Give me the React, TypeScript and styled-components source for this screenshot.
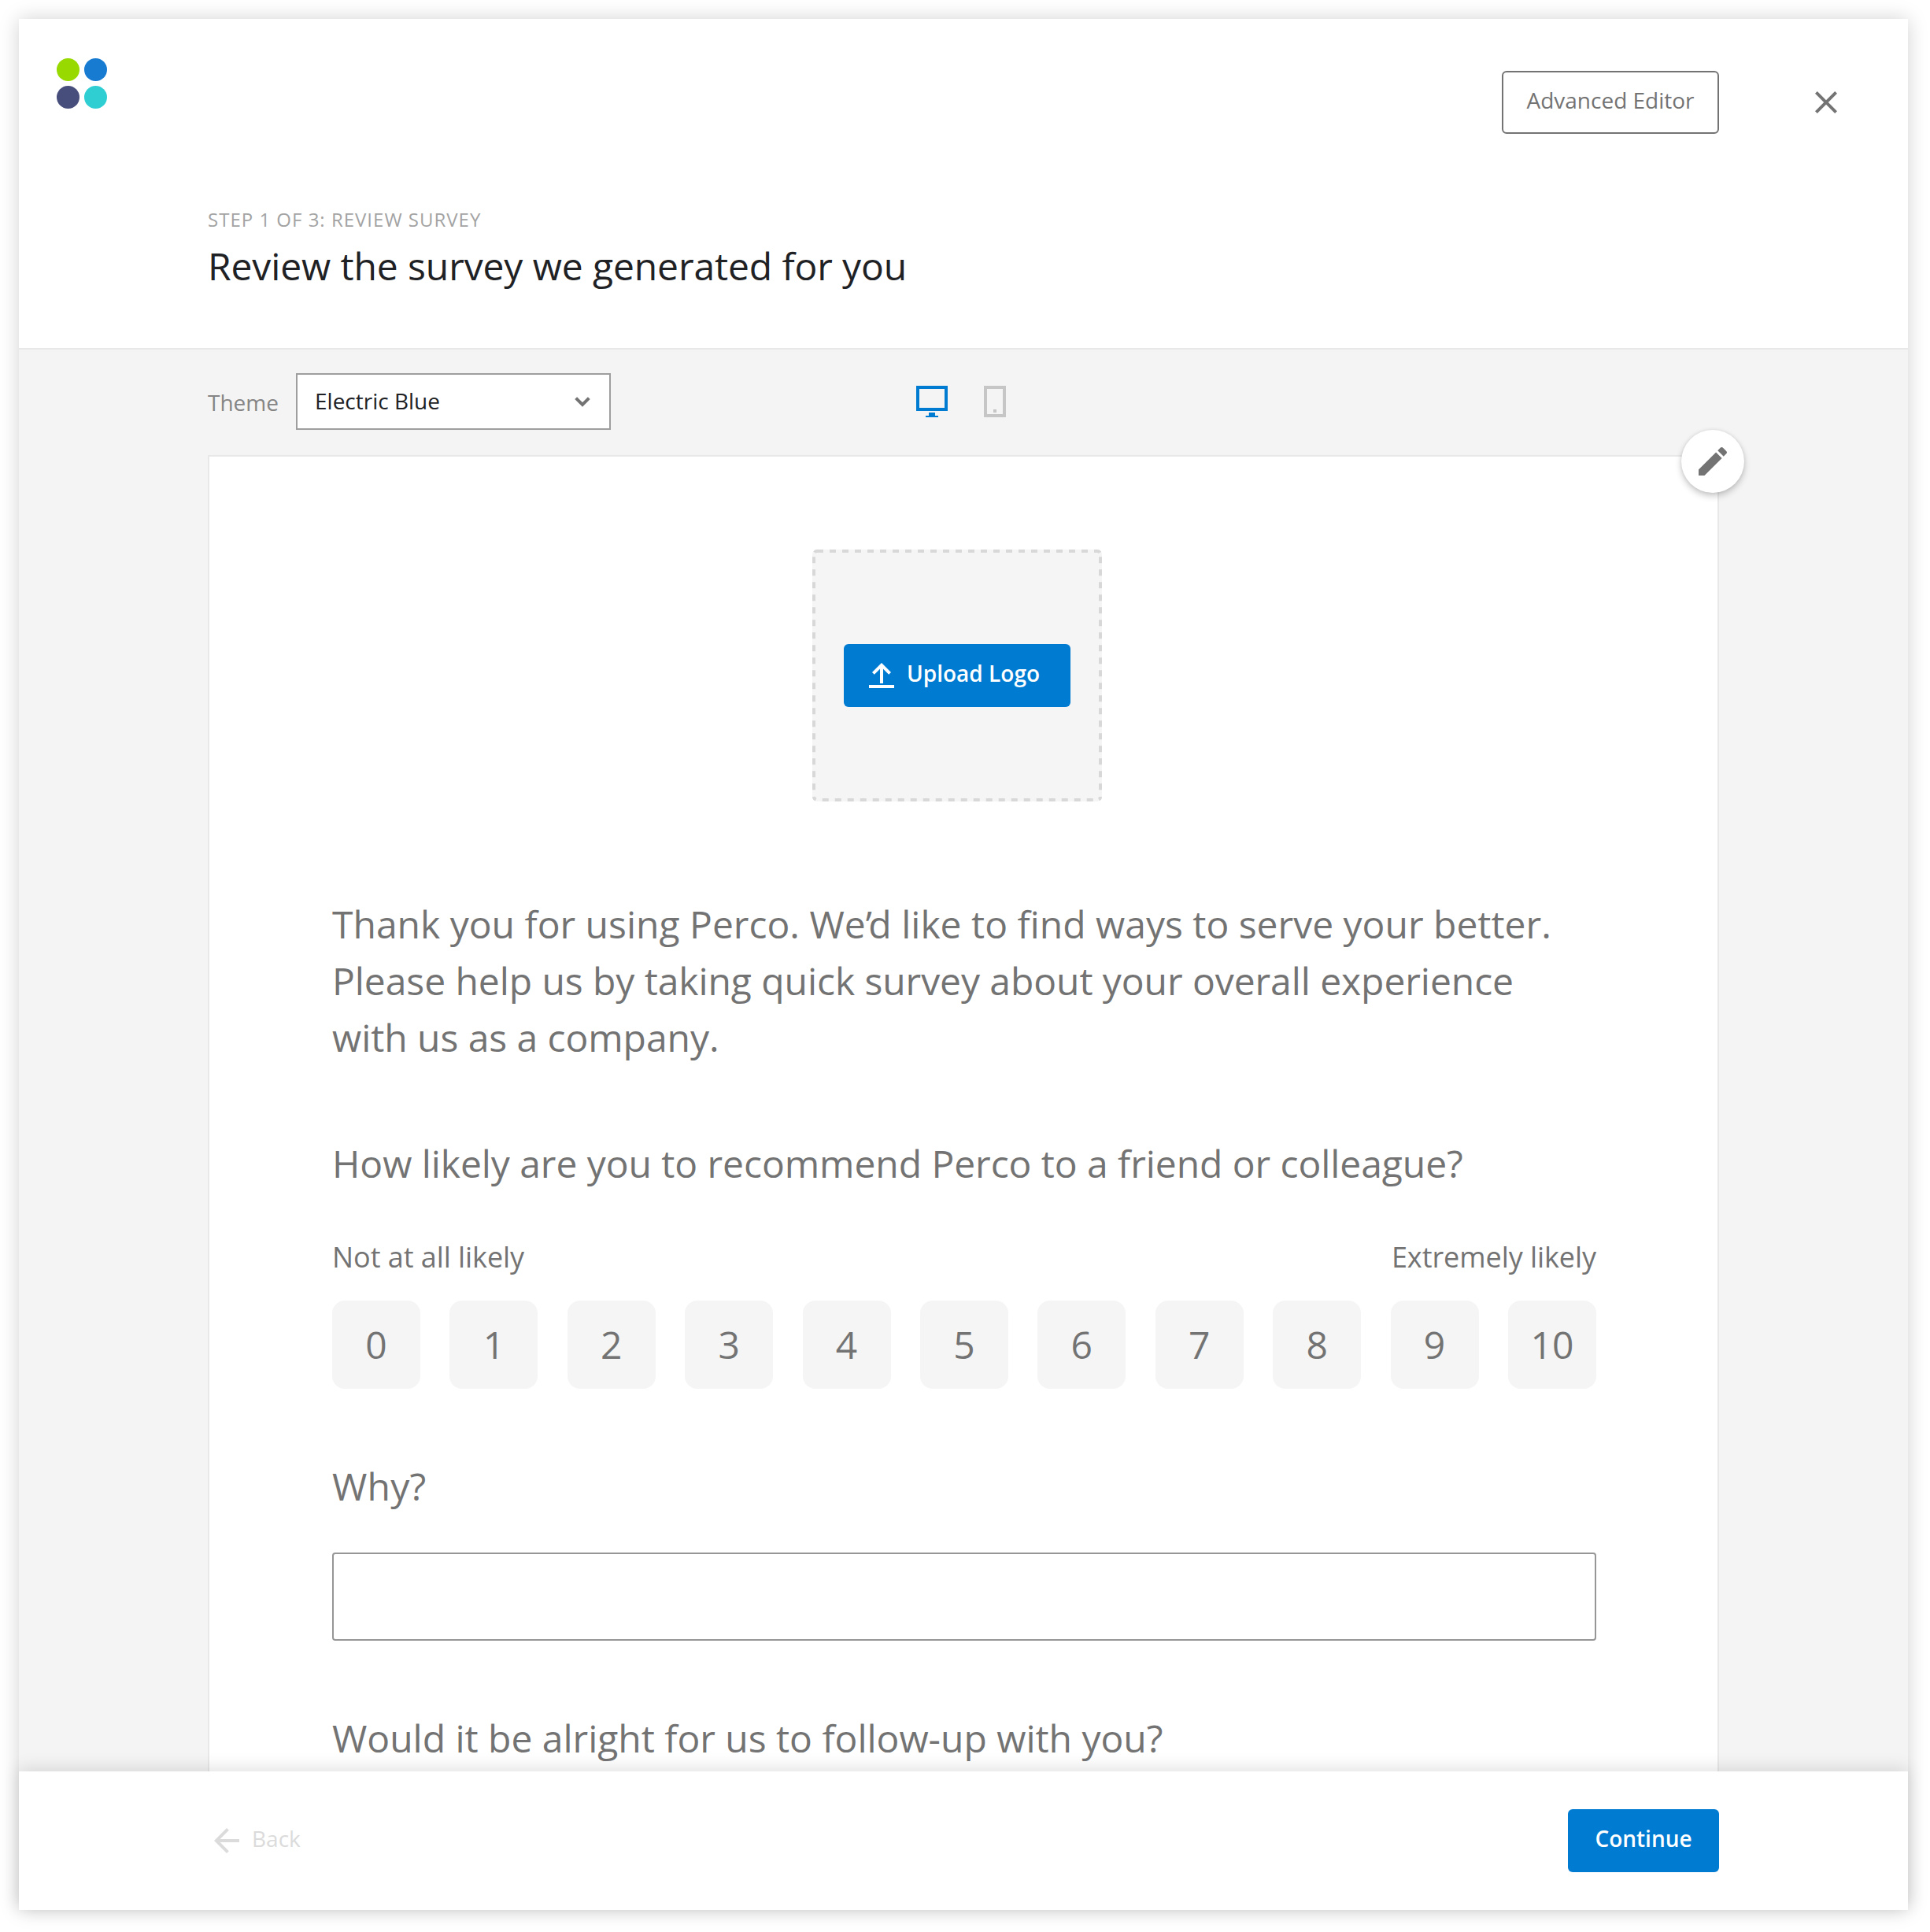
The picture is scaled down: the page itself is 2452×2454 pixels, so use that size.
import React from "react";
import styled, { createGlobalStyle } from "styled-components";

const colors = {
  blue: "#007bd2",
  text: "#202124",
  gray: "#737373",
  lightGray: "#a3a3a3",
  canvas: "#f4f4f4",
  tile: "#f5f5f5",
  line: "#e8e8e8",
};

const GlobalStyle = createGlobalStyle`
  *, *::before, *::after { box-sizing: border-box; }
  body {
    margin: 0;
    background: #fff;
    font-family: "Open Sans", "Noto Sans", sans-serif;
    color: ${colors.gray};
  }
  button { font-family: inherit; margin: 0; cursor: pointer; }
  svg { display: block; flex: none; }
`;

const Page = styled.div`
  height: 2454px;
  padding: 24px 28px 28px 24px;
  overflow: hidden;
`;

const Window = styled.div`
  width: 2400px;
  height: 2402px;
  display: flex;
  flex-direction: column;
  background: #fff;
  box-shadow: 0 0 24px rgba(0, 0, 0, 0.18);
`;

const Header = styled.header`
  flex: none;
  height: 420px;
  border-bottom: 2px solid ${colors.line};
`;

const TopBar = styled.div`
  height: 239px;
  display: flex;
  align-items: flex-start;
  justify-content: space-between;
  padding: 50px 80px 0 48px;
`;

const LogoMark = styled.div`
  display: grid;
  grid-template-columns: repeat(2, 29px);
  grid-auto-rows: 29px;
  gap: 6px;
`;

const LogoDot = styled.span<{ $color: string }>`
  border-radius: 50%;
  background: ${(p) => p.$color};
`;

const TopActions = styled.div`
  display: flex;
  align-items: center;
  gap: 112px;
  margin-top: 16px;
`;

const Button = styled.button<{ $primary?: boolean; $width: number }>`
  width: ${(p) => p.$width}px;
  height: 80px;
  padding: 0;
  display: flex;
  align-items: center;
  justify-content: center;
  border: ${(p) => (p.$primary ? "none" : `2px solid ${colors.gray}`)};
  border-radius: 6px;
  background: ${(p) => (p.$primary ? colors.blue : "#fff")};
  color: ${(p) => (p.$primary ? "#fff" : colors.gray)};
  font-size: 28px;
  font-weight: ${(p) => (p.$primary ? 600 : 400)};
`;

const UploadButton = styled(Button)`
  justify-content: flex-start;
  gap: 16px;
  padding-left: 32px;
`;

const ButtonLabel = styled.span`
  line-height: 40px;
  padding-bottom: 6px;
  white-space: nowrap;
`;

const IconButton = styled.button`
  padding: 0;
  border: none;
  background: none;
  color: ${colors.gray};
`;

const Heading = styled.div`
  padding-left: 240px;
`;

const StepLabel = styled.div`
  font-size: 24px;
  line-height: 32px;
  letter-spacing: 1px;
  color: ${colors.lightGray};
`;

const Title = styled.h1`
  margin: 7px 0 0;
  font-size: 48px;
  font-weight: 400;
  line-height: 72px;
  letter-spacing: -0.11px;
  color: ${colors.text};
`;

const Canvas = styled.main`
  flex: 1;
  min-height: 0;
  overflow: hidden;
  padding: 0 240px;
  background: ${colors.canvas};
`;

const Toolbar = styled.div`
  height: 134px;
  display: grid;
  grid-template-columns: 900px auto;
  align-items: center;
  padding-bottom: 2px;
`;

const ThemePicker = styled.div`
  display: flex;
  align-items: center;
  font-size: 28px;
  line-height: 40px;
`;

const ThemeLabel = styled.span`
  width: 112px;
  padding-top: 2px;
  color: #858585;
`;

const Select = styled.div`
  width: 400px;
  height: 72px;
  display: flex;
  align-items: center;
  justify-content: space-between;
  padding: 0 14px 0 22px;
  border: 2px solid #9e9e9e;
  background: #fff;
  color: ${colors.text};
`;

const SelectValue = styled.span`
  padding-bottom: 2px;
`;

const DeviceSwitch = styled.div`
  display: flex;
  gap: 46px;
`;

const Card = styled.section`
  position: relative;
  height: 1800px;
  padding: 118px 154px 0 156px;
  border: 2px solid ${colors.line};
  background: #fff;
`;

const EditButton = styled.button`
  position: absolute;
  top: -34px;
  right: -34px;
  width: 80px;
  height: 80px;
  padding: 0;
  display: flex;
  align-items: center;
  justify-content: center;
  border: none;
  border-radius: 50%;
  background: #fff;
  color: ${colors.gray};
  box-shadow: 0 4px 8px rgba(0, 0, 0, 0.22), 0 0 4px rgba(0, 0, 0, 0.08);
`;

const DropZone = styled.div`
  position: relative;
  width: 368px;
  height: 320px;
  margin-left: 610px;
  display: flex;
  align-items: center;
  justify-content: center;
  border-radius: 6px;
  background: ${colors.tile};
`;

const DashedOutline = styled.svg`
  position: absolute;
  inset: 0;
`;

const Message = styled.p<{ $top: number; $tracking?: number }>`
  margin: ${(p) => p.$top}px 0 0;
  font-size: 48px;
  line-height: 72px;
  letter-spacing: ${(p) => p.$tracking ?? 0}px;
`;

const Line = styled.span<{ $tracking?: number }>`
  display: block;
  letter-spacing: ${(p) => p.$tracking ?? 0}px;
`;

const Apostrophe = styled.span`
  letter-spacing: -4.5px;
`;

const ScaleLabels = styled.div`
  display: flex;
  justify-content: space-between;
  margin-top: 58px;
  font-size: 36px;
  line-height: 50px;
  letter-spacing: -0.06px;
`;

const Scale = styled.div`
  display: flex;
  justify-content: space-between;
  margin-top: 30px;
`;

const ScoreButton = styled.button`
  width: 112px;
  height: 112px;
  padding: 0;
  border: none;
  border-radius: 16px;
  background: ${colors.tile};
  color: ${colors.gray};
  font-size: 48px;
  line-height: 72px;
`;

const AnswerInput = styled.input`
  display: block;
  width: 100%;
  height: 112px;
  margin-top: 48px;
  border: 2px solid #969696;
  border-radius: 4px;
  background: #fff;
`;

const Footer = styled.footer`
  position: relative;
  flex: none;
  height: 176px;
  display: flex;
  align-items: center;
  justify-content: space-between;
  padding: 0 240px;
  background: #fff;
  box-shadow: 0 -4px 20px rgba(0, 0, 0, 0.12);
`;

const BackLink = styled.div`
  display: flex;
  align-items: center;
  gap: 8px;
  font-size: 28px;
  color: #dbdbdb;
`;

const CloseIcon = () => (
  <svg width="48" height="48" viewBox="0 0 24 24" fill="currentColor">
    <path d="M19 6.41L17.59 5 12 10.59 6.41 5 5 6.41 10.59 12 5 17.59 6.41 19 12 13.41 17.59 19 19 17.59 13.41 12z" />
  </svg>
);

const ChevronIcon = () => (
  <svg width="40" height="40" viewBox="0 0 40 40" fill="none" stroke="#737373" strokeWidth="4">
    <path d="M11.7 15.7L20 24l8.3-8.3" />
  </svg>
);

const DesktopIcon = () => (
  <svg width="40" height="40" viewBox="0 0 40 40" fill={colors.blue}>
    <path d="M0 0h40v32H0zM4 4v24h32V4z" fillRule="evenodd" />
    <path d="M16 34h8v4h4v2H12v-2h4z" />
  </svg>
);

const PhoneIcon = () => (
  <svg width="28" height="40" viewBox="0 0 28 40" fill="#c6c6c6">
    <path d="M0 0h28v40H0zM4 4v32h20V4z" fillRule="evenodd" />
    <path d="M12 30h4v4h-4z" />
  </svg>
);

const PencilIcon = () => (
  <svg width="48" height="48" viewBox="0 0 24 24" fill="currentColor">
    <path d="M3 17.25V21h3.75L17.81 9.94l-3.75-3.75L3 17.25zM20.71 7.04c.39-.39.39-1.02 0-1.41l-2.34-2.34c-.39-.39-1.02-.39-1.41 0l-1.83 1.83 3.75 3.75 1.83-1.83z" />
  </svg>
);

const UploadIcon = () => (
  <svg width="32" height="32" viewBox="0 0 32 32" fill="none" stroke="currentColor" strokeWidth="4">
    <path d="M16 26V3M5.4 13.4L16 2.8l10.6 10.6M0 30h32" />
  </svg>
);

const BackIcon = () => (
  <svg width="48" height="48" viewBox="0 0 24 24" fill="currentColor">
    <path d="M20 11H7.83l5.59-5.59L12 4l-8 8 8 8 1.41-1.41L7.83 13H20v-2z" />
  </svg>
);

const Outline = () => (
  <DashedOutline width="368" height="320" viewBox="0 0 368 320" fill="none" stroke="#d8d8d8" strokeWidth="4">
    <path d="M6 2H362" strokeDasharray="8 8" />
    <path d="M366 9.3V312" strokeDasharray="8 8" />
    <path d="M12.7 318H360" strokeDasharray="8 8" />
    <path d="M2 9.3V312" strokeDasharray="8 8" />
    <path d="M2.8 3.6Q4 2 6 2M362 2Q364.4 2 365.4 4M366 314Q366 316.5 364 317.5M2 314Q2.2 316.5 4.6 317.7" />
  </DashedOutline>
);

const logoColors = ["#98d900", "#187bd2", "#474e7c", "#2fced3"];
const scores = [0, 1, 2, 3, 4, 5, 6, 7, 8, 9, 10];

export default function App() {
  return (
    <Page>
      <GlobalStyle />
      <Window>
        <Header>
          <TopBar>
            <LogoMark>
              {logoColors.map((c) => (
                <LogoDot key={c} $color={c} />
              ))}
            </LogoMark>
            <TopActions>
              <Button $width={276}>
                <ButtonLabel>Advanced Editor</ButtonLabel>
              </Button>
              <IconButton aria-label="Close">
                <CloseIcon />
              </IconButton>
            </TopActions>
          </TopBar>
          <Heading>
            <StepLabel>STEP 1 OF 3: REVIEW SURVEY</StepLabel>
            <Title>Review the survey we generated for you</Title>
          </Heading>
        </Header>
        <Canvas>
          <Toolbar>
            <ThemePicker>
              <ThemeLabel>Theme</ThemeLabel>
              <Select>
                <SelectValue>Electric Blue</SelectValue>
                <ChevronIcon />
              </Select>
            </ThemePicker>
            <DeviceSwitch>
              <DesktopIcon />
              <PhoneIcon />
            </DeviceSwitch>
          </Toolbar>
          <Card>
            <EditButton aria-label="Edit">
              <PencilIcon />
            </EditButton>
            <DropZone>
              <Outline />
              <UploadButton $primary $width={288}>
                <UploadIcon />
                <ButtonLabel>Upload Logo</ButtonLabel>
              </UploadButton>
            </DropZone>
            <Message $top={120}>
              <Line>
                Thank you for using Perco. We<Apostrophe>’</Apostrophe>d like to find ways to serve your better.
              </Line>
              <Line $tracking={-0.07}>Please help us by taking quick survey about your overall experience</Line>
              <Line $tracking={-0.06}>with us as a company.</Line>
            </Message>
            <Message $top={88} $tracking={-0.065}>
              How likely are you to recommend Perco to a friend or colleague?
            </Message>
            <ScaleLabels>
              <span>Not at all likely</span>
              <span>Extremely likely</span>
            </ScaleLabels>
            <Scale>
              {scores.map((n) => (
                <ScoreButton key={n}>{n}</ScoreButton>
              ))}
            </Scale>
            <Message $top={88} $tracking={0.25}>
              Why?
            </Message>
            <AnswerInput />
            <Message $top={88} $tracking={-0.02}>
              Would it be alright for us to follow-up with you?
            </Message>
          </Card>
        </Canvas>
        <Footer>
          <BackLink>
            <BackIcon />
            <ButtonLabel>Back</ButtonLabel>
          </BackLink>
          <Button $primary $width={192}>
            <ButtonLabel>Continue</ButtonLabel>
          </Button>
        </Footer>
      </Window>
    </Page>
  );
}
